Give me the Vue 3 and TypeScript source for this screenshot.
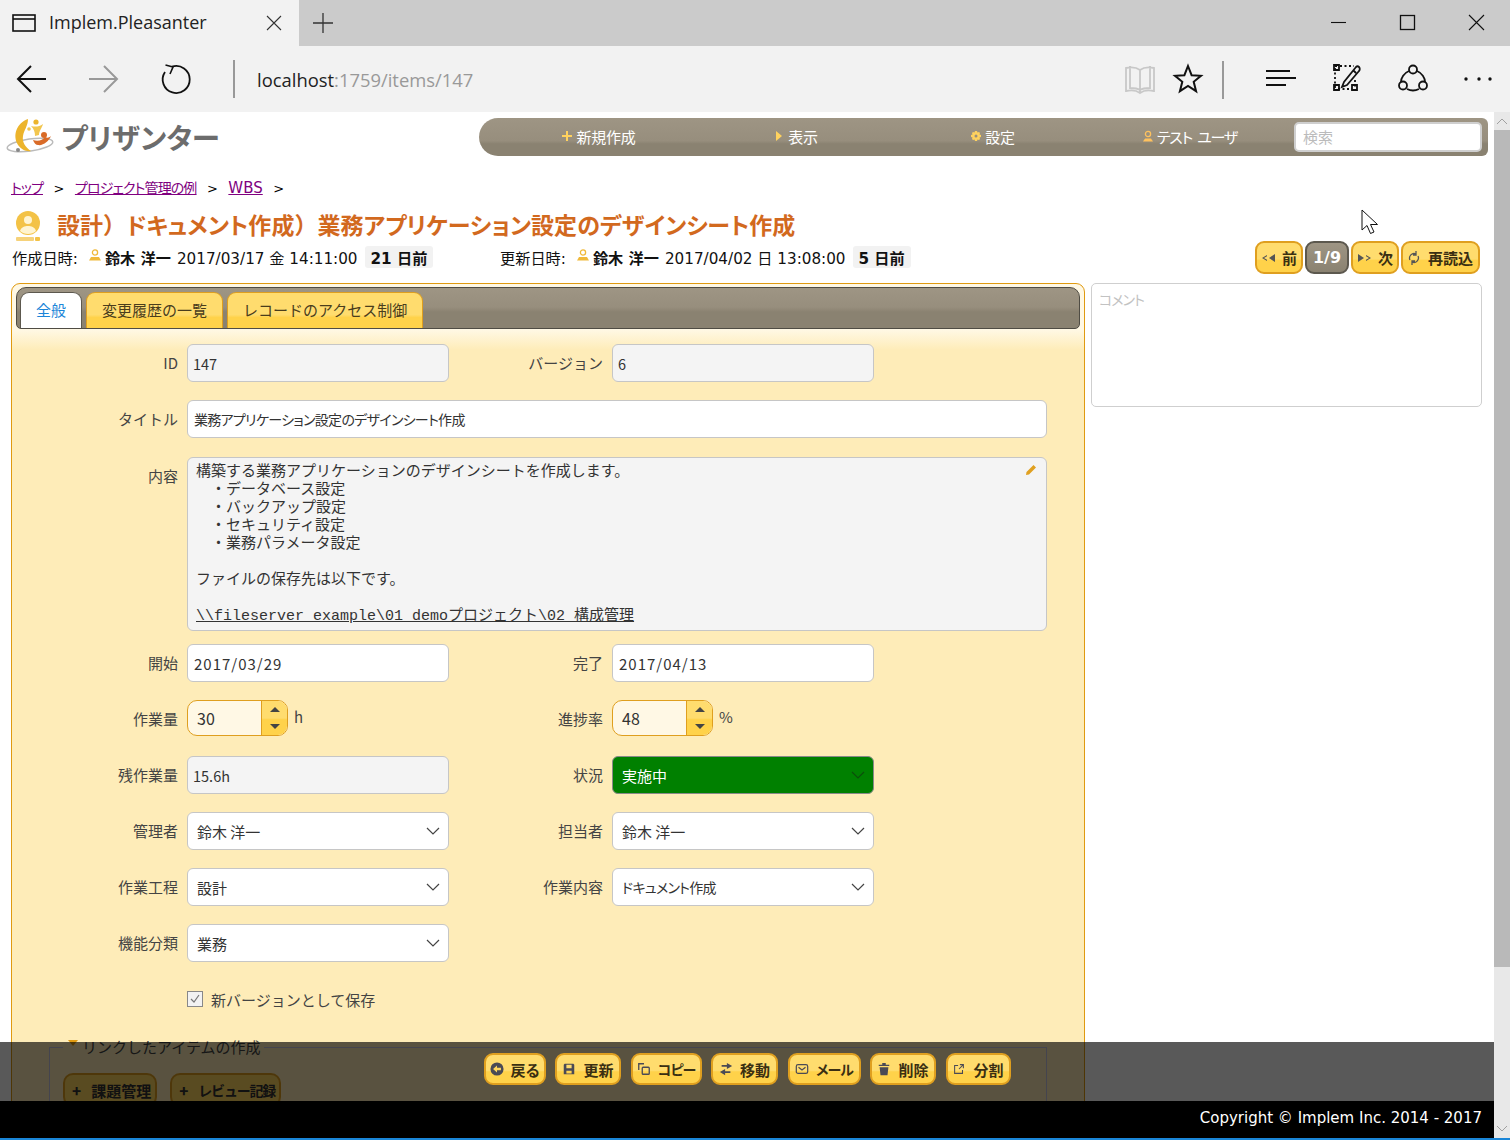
<script setup lang="ts">
interface CmdButton {
  label: string
  icon: string
  width: number
  tight?: boolean
}

const menuItems = [
  { label: '新規作成', mark: 'plus' },
  { label: '表示', mark: 'tri' },
  { label: '設定', mark: 'gear' },
  { label: 'テスト ユーザ', mark: 'user' },
]

const commands: CmdButton[] = [
  { label: '戻る', icon: 'back', width: 62 },
  { label: '更新', icon: 'save', width: 66 },
  { label: 'コピー', icon: 'copy', width: 71, tight: true },
  { label: '移動', icon: 'move', width: 67 },
  { label: 'メール', icon: 'mail', width: 73, tight: true },
  { label: '削除', icon: 'trash', width: 66 },
  { label: '分割', icon: 'split', width: 65 },
]

const bodyLines = [
  '構築する業務アプリケーションのデザインシートを作成します。',
  '　・データベース設定',
  '　・バックアップ設定',
  '　・セキュリティ設定',
  '　・業務パラメータ設定',
  '',
  'ファイルの保存先は以下です。',
  '',
]
</script>

<template>
  <div class="shot">
    <div class="tabstrip">
      <div class="browser-tab">
        <svg width="24" height="18" viewBox="0 0 24 18" fill="none" stroke="#111" stroke-width="1.6">
          <rect x="1" y="1" width="22" height="16" />
          <path d="M1 5h22" />
        </svg>
        <span class="browser-title">Implem.Pleasanter</span>
        <svg class="tab-x" width="16" height="16" viewBox="0 0 16 16" stroke="#333" stroke-width="1.1">
          <path d="M1 1l14 14M15 1L1 15" />
        </svg>
      </div>
      <svg class="tab-plus" width="20" height="20" viewBox="0 0 20 20" stroke="#333" stroke-width="1.3">
        <path d="M0 10h20M10 0v20" />
      </svg>
      <svg class="win-ctl" width="180" height="46" viewBox="0 0 180 46" fill="none" stroke="#111" stroke-width="1.1">
        <path d="M1 22.5h15" />
        <rect x="70.5" y="15.5" width="14" height="14" stroke-width="1.3" />
        <path d="M139 15l15 15M154 15l-15 15" />
      </svg>
    </div>

    <div class="toolbar">
      <svg width="257" height="66" viewBox="0 0 257 66" fill="none" stroke="#111" stroke-width="2">
        <path d="M46 33H19M31 20L18 33l13 13" />
        <path d="M89 33h28M104 20l13 13-13 13" stroke="#999" />
        <path d="M172 20.700A13.500 13.500 0 1 1 165 26" stroke-width="1.800" />
        <path d="M165.500 19l7.500 2-3 7" stroke-width="1.600" />
        <path d="M234 14v38" stroke="#999" />
      </svg>
      <div class="address">localhost<span>:1759/items/147</span></div>
      <svg width="390" height="66" viewBox="1120 46 390 66" fill="none" stroke="#111" stroke-width="1.8">
        <path d="M1140 70c-4-3-9-3-14-2v23c5-1 10-1 14 2c4-3 9-3 14-2V68c-5-1-10-1-14 2zM1140 70v23M1130 66v22c3 0 7 0 10 2c3-2 7-2 10-2V66" stroke="#c8c8c8" />
        <path d="M1188 66l3.600 9.200 9.400.6-7.300 6 2.400 9.400-8.100-5.200-8.100 5.200 2.400-9.400-7.300-6 9.400-.6z" stroke-width="2" />
        <path d="M1223 61v38" stroke="#999" stroke-width="2" />
        <path d="M1266 71h24M1266 78h30M1266 85h20" />
        <path d="M1335 66h2M1340 66h14M1335 68v20M1355 80v8M1338 89h14" stroke-dasharray="2 2.500" />
        <path d="M1334 65h5v5h-5zM1352 85h5v5h-5zM1334 85h5v5h-5z" />
        <path d="M1344 82l-2 5 5-2 12-14c1-1 1-3 0-4s-2-1-3 0zM1353 70l3 3" />
        <circle cx="1413" cy="69.500" r="4" />
        <circle cx="1403" cy="85.500" r="4" />
        <circle cx="1423" cy="85.500" r="4" />
        <path d="M1409 71c-5 2-8 7-8 11M1417 71c5 2 8 7 8 11M1407 89c4 2 8 2 12 0" />
        <circle cx="1466" cy="79" r="1.700" fill="#111" stroke="none" />
        <circle cx="1479" cy="79" r="1.700" fill="#111" stroke="none" />
        <circle cx="1490" cy="79" r="1.700" fill="#111" stroke="none" />
      </svg>
    </div>

    <div class="viewport">
      <div class="content">
        <header class="site-head">
          <div class="logo">
            <svg width="50" height="38" viewBox="0 0 50 38">
              <ellipse cx="24" cy="27" rx="23" ry="6" fill="none" stroke="#bbb" stroke-width="1.500" transform="rotate(-8 24 27)" />
              <path d="M22 1C11 5 6 17 12 27c3 4 8 7 13 6-6-4-9-9-8-15C18 12 22 8 22 1z" fill="#ecb42c" />
              <circle cx="30" cy="4" r="2.600" fill="#ecb42c" />
              <circle cx="23" cy="11" r="1.800" fill="#f2c64f" />
              <path d="M25 8c4 1 8 1 12-2-1 4-4 7-4 11l-4 1c0-4-1-7-4-10z" fill="#f2c64f" />
              <circle cx="38" cy="17" r="3" fill="#d96b28" />
              <path d="M27 22c5 2 10 0 12-3 2 1 4 1 6-1-2 5-8 10-13 9-2 0-4-2-5-5z" fill="#d96b28" />
              <circle cx="12" cy="32" r="2" fill="#888" />
            </svg>
            <span class="logo-text">プリザンター</span>
          </div>
          <nav class="menu">
            <div v-for="item in menuItems" :key="item.label" class="menu-item" :class="{ 'user-item': item.mark === 'user' }">
              <svg width="12" height="12" viewBox="0 0 12 12">
                <path v-if="item.mark === 'plus'" d="M5 1h2v4h4v2H7v4H5V7H1V5h4z" fill="#ffd25e" />
                <path v-else-if="item.mark === 'tri'" d="M3 1l6 5-6 5z" fill="#ffd25e" />
                <path v-else-if="item.mark === 'gear'" d="M5 1h2l.5 1.500L9 2l1 1-.5 1.500L11 5v2l-1.500.5L10 9l-1 1-1.500-.5L7 11H5l-.5-1.500L3 10 2 9l.5-1.500L1 7V5l1.500-.5L2 3l1-1 1.500.5zM6 4.500a1.500 1.500 0 1 0 0 3a1.500 1.500 0 1 0 0-3z" fill="#ffd25e" fill-rule="evenodd" />
                <g v-else>
                  <circle cx="6" cy="4" r="2.600" fill="none" stroke="#ffc25e" stroke-width="1.300" />
                  <path d="M3 8.500h6l2 3H1z" fill="#ffc25e" />
                </g>
              </svg>
              <span>{{ item.label }}</span>
            </div>
            <div class="search">検索</div>
          </nav>
        </header>

        <div class="breadcrumb">
          <a>トップ</a><span>&gt;</span><a>プロジェクト管理の例</a><span>&gt;</span><a class="wbs">WBS</a><span>&gt;</span>
        </div>

        <div class="title-row">
          <svg width="26" height="30" viewBox="0 0 26 30">
            <circle cx="13" cy="12" r="12" fill="#f3c246" />
            <circle cx="13" cy="9" r="4" fill="#fff4d0" />
            <path d="M5 20c1-4 5-5 8-5s7 1 8 5c-2 2-5 3-8 3s-6-1-8-3z" fill="#fff4d0" />
            <rect x="1" y="26" width="18" height="4" rx="1" fill="#f6d27a" />
            <rect x="20" y="26" width="5" height="4" rx="1" fill="#f3c246" />
          </svg>
          <h1>設計<span class="fw">）</span>ドキュメント作成<span class="fw">）</span>業務アプリケーション設定のデザインシート作成</h1>
        </div>

        <div class="meta-row">
          <div class="meta">
            <span class="meta-label">作成日時:</span>
            <svg class="user" width="12" height="12" viewBox="0 0 12 12"><circle cx="6" cy="3.500" r="2.600" fill="none" stroke="#f0b93a" stroke-width="1.300" /><path d="M2 8h8l2 3.500H0z" fill="#f0b93a" /></svg>
            <b>鈴木 洋一</b>
            <span>2017/03/17 金 14:11:00</span>
            <b class="days">21 日前</b>
          </div>
          <div class="meta updated">
            <span class="meta-label">更新日時:</span>
            <svg class="user" width="12" height="12" viewBox="0 0 12 12"><circle cx="6" cy="3.500" r="2.600" fill="none" stroke="#f0b93a" stroke-width="1.300" /><path d="M2 8h8l2 3.500H0z" fill="#f0b93a" /></svg>
            <b>鈴木 洋一</b>
            <span>2017/04/02 日 13:08:00</span>
            <b class="days">5 日前</b>
          </div>
          <div class="pager">
            <button class="pg prev" type="button"><svg width="15" height="8" viewBox="0 0 15 8" fill="#555"><path d="M6 1L1 4l5 3v-1.200L3 4l3-1.800zM14 0v8L8 4z" /></svg>前</button>
            <button class="pg count" type="button">1/9</button>
            <button class="pg next" type="button"><svg width="15" height="8" viewBox="0 0 15 8" fill="#555"><path d="M1 0v8l6-4zM9 1l5 3-5 3v-1.200L12 4 9 2.200z" /></svg>次</button>
            <button class="pg reload" type="button"><svg width="12" height="14" viewBox="0 0 12 14" fill="none" stroke="#555" stroke-width="1.300"><path d="M2 9a4.500 4.500 0 0 1 6-6M10 5a4.500 4.500 0 0 1-6 6M8 0v4h-3M4 14v-4h3" /></svg>再読込</button>
          </div>
        </div>

        <div class="main">
          <section class="panel">
            <div class="tabs">
              <div class="tab active">全般</div>
              <div class="tab">変更履歴の一覧</div>
              <div class="tab">レコードのアクセス制御</div>
            </div>

            <div class="form">
              <div class="row">
                <div class="field"><label>ID</label><div class="input ro">147</div></div>
                <div class="field second"><label>バージョン</label><div class="input ro">6</div></div>
              </div>
              <div class="row row-title">
                <div class="field wide"><label>タイトル</label><div class="input narrow">業務アプリケーション設定のデザインシート作成</div></div>
              </div>
              <div class="row row-body">
                <div class="field wide">
                  <label>内容</label>
                  <div class="markdown">
                    <svg class="pencil" width="12" height="12" viewBox="0 0 12 12"><path d="M8.500 1l2.500 2.500-7 7L1 11l.5-3z" fill="#e0a020" /></svg>
                    <div v-for="(line, i) in bodyLines" :key="i" class="md-line">{{ line }}</div>
                    <a class="md-line md-link">\\fileserver example\01 demoプロジェクト\02 構成管理</a>
                  </div>
                </div>
              </div>
              <div class="row">
                <div class="field"><label>開始</label><div class="input date">2017/03/29</div></div>
                <div class="field second"><label>完了</label><div class="input date">2017/04/13</div></div>
              </div>
              <div class="row">
                <div class="field">
                  <label>作業量</label>
                  <div class="spinner"><span class="spin-val">30</span><span class="spin-btn"><i class="up"></i><i class="down"></i></span></div>
                  <span class="unit">h</span>
                </div>
                <div class="field second">
                  <label>進捗率</label>
                  <div class="spinner"><span class="spin-val">48</span><span class="spin-btn"><i class="up"></i><i class="down"></i></span></div>
                  <span class="unit">%</span>
                </div>
              </div>
              <div class="row">
                <div class="field"><label>残作業量</label><div class="input ro">15.6h</div></div>
                <div class="field second">
                  <label>状況</label>
                  <div class="input select green">実施中<svg width="14" height="8" viewBox="0 0 14 8" fill="none" stroke="#0b4f0b" stroke-width="1.200"><path d="M1 1l6 6 6-6" /></svg></div>
                </div>
              </div>
              <div class="row">
                <div class="field">
                  <label>管理者</label>
                  <div class="input select">鈴木 洋一<svg width="14" height="8" viewBox="0 0 14 8" fill="none" stroke="#444" stroke-width="1.200"><path d="M1 1l6 6 6-6" /></svg></div>
                </div>
                <div class="field second">
                  <label>担当者</label>
                  <div class="input select">鈴木 洋一<svg width="14" height="8" viewBox="0 0 14 8" fill="none" stroke="#444" stroke-width="1.200"><path d="M1 1l6 6 6-6" /></svg></div>
                </div>
              </div>
              <div class="row">
                <div class="field">
                  <label>作業工程</label>
                  <div class="input select">設計<svg width="14" height="8" viewBox="0 0 14 8" fill="none" stroke="#444" stroke-width="1.200"><path d="M1 1l6 6 6-6" /></svg></div>
                </div>
                <div class="field second">
                  <label>作業内容</label>
                  <div class="input select narrow">ドキュメント作成<svg width="14" height="8" viewBox="0 0 14 8" fill="none" stroke="#444" stroke-width="1.200"><path d="M1 1l6 6 6-6" /></svg></div>
                </div>
              </div>
              <div class="row">
                <div class="field">
                  <label>機能分類</label>
                  <div class="input select">業務<svg width="14" height="8" viewBox="0 0 14 8" fill="none" stroke="#444" stroke-width="1.200"><path d="M1 1l6 6 6-6" /></svg></div>
                </div>
              </div>

              <div class="check-row">
                <span class="check"><svg width="12" height="12" viewBox="0 0 12 12" fill="none" stroke="#777" stroke-width="1.200"><path d="M2 6l3 3 5-7" /></svg></span>
                <span>新バージョンとして保存</span>
              </div>

              <fieldset class="links">
                <legend><i class="legend-tri"></i>リンクしたアイテムの作成</legend>
                <div class="link-btns">
                  <button type="button" class="link-btn"><b>+</b>課題管理</button>
                  <button type="button" class="link-btn"><b>+</b><span class="link-tight">レビュー記録</span></button>
                </div>
              </fieldset>
            </div>
          </section>
          <aside class="comment">コメント</aside>
        </div>
      </div>

      <div class="scrollbar">
        <svg width="16" height="18" viewBox="0 0 16 18" fill="none" stroke="#a0a0a0"><path d="M3 12l5-5 5 5" /></svg>
        <div class="thumb"></div>
        <svg class="scroll-down" width="16" height="18" viewBox="0 0 16 18" fill="none" stroke="#a0a0a0"><path d="M3 6l5 5 5-5" /></svg>
      </div>

      <div class="command-area">
        <button
          v-for="cmd in commands"
          :key="cmd.label"
          type="button"
          class="cmd"
          :class="{ tight: cmd.tight }"
          :style="{ width: `${cmd.width}px` }"
        >
          <svg width="14" height="14" viewBox="0 0 16 16">
            <g v-if="cmd.icon === 'back'"><circle cx="8" cy="8" r="7.500" fill="#4a4a55" /><path d="M3.500 8L8 4v2.500h4.500v3H8V12z" fill="#ffd65e" /></g>
            <path v-else-if="cmd.icon === 'save'" d="M3 2h10l1 1v11H2V3zM5 3v4h6V3zM5 10v3h6v-3z" fill="#4a4a55" fill-rule="evenodd" />
            <g v-else-if="cmd.icon === 'copy'" fill="none" stroke="#4a4a55" stroke-width="1.500"><path d="M2 9V2h6" /><rect x="6" y="6" width="8" height="8" rx="1" /></g>
            <path v-else-if="cmd.icon === 'move'" d="M9 1l6 3.500L9 8V5.500H3v-2h6zM7 8v2.500h6v2H7V15l-6-3.500z" fill="#4a4a55" />
            <g v-else-if="cmd.icon === 'mail'" fill="none" stroke="#4a4a55" stroke-width="1.400"><rect x="1.500" y="3" width="13" height="10" rx="2" /><path d="M4 6l4 3 4-3" /></g>
            <path v-else-if="cmd.icon === 'trash'" d="M6 1h4v2h4v1.500H2V3h4zM3 6h10l-1 9H4z" fill="#4a4a55" />
            <g v-else fill="none" stroke="#4a4a55" stroke-width="1.200"><path d="M12 9v4H3V4h4M8 8l5-5M9 3h4v4" /></g>
          </svg>
          <span>{{ cmd.label }}</span>
        </button>
      </div>
      <footer class="copyright">Copyright © Implem Inc. 2014 - 2017</footer>
    </div>

    <svg class="cursor" width="20" height="28" viewBox="0 0 20 28">
      <path d="M1 1v20l5-4.500 3.500 8 3.500-1.500-3.500-7.500h7z" fill="#fff" stroke="#111" stroke-width="1" />
    </svg>
  </div>
</template>

<style scoped>
.shot {
  position: relative;
  width: 1510px;
  height: 1140px;
  overflow: hidden;
  background: #fff;
  color: #333;
  font-family: "Noto Sans CJK JP", "Noto Sans", sans-serif;
  font-size: 15px;
  font-feature-settings: "palt";
}

.tabstrip {
  display: flex;
  align-items: center;
  height: 46px;
  background: #cbcbcb;
}

.browser-tab {
  display: flex;
  align-items: center;
  width: 299px;
  height: 46px;
  padding: 0 16px 0 12px;
  box-sizing: border-box;
  background: #f2f2f2;
}

.browser-title {
  margin: -2px 0 0 13px;
  font-family: "Open Sans", sans-serif;
  font-size: 18px;
  color: #222;
}

.tab-x {
  margin-left: auto;
  margin-right: 1px;
}

.tab-plus {
  margin-left: 14px;
  margin-top: -1px;
}

.win-ctl {
  margin-left: auto;
}

.toolbar {
  display: flex;
  align-items: center;
  height: 66px;
  background: #f2f2f2;
}

.address {
  flex: 1;
  padding-top: 1px;
  font-family: "Open Sans", sans-serif;
  font-size: 18.4px;
  color: #222;
}

.address span {
  color: #999;
}

.viewport {
  position: relative;
  display: flex;
  height: 1026px;
  overflow: hidden;
  border-bottom: 2px solid #1a86d8;
  box-sizing: content-box;
}

.content {
  width: 1494px;
  flex: none;
}

.site-head {
  display: flex;
  align-items: center;
  height: 50px;
  padding: 0 6px;
  box-sizing: border-box;
}

.logo {
  display: flex;
  align-items: center;
  width: 473px;
  gap: 5px;
}

.logo-text {
  font-size: 28.500px;
  font-weight: 700;
  line-height: 38px;
  color: #6c6c6c;
}

.menu {
  display: flex;
  align-items: center;
  width: 1009px;
  height: 38px;
  padding-left: 21px;
  box-sizing: border-box;
  border-radius: 19px 6px 6px 19px;
  background: linear-gradient(to bottom, #9e9584 0%, #978e7d 60%, #8a8271 68%, #8a8271 100%);
}

.menu-item {
  display: flex;
  align-items: center;
  justify-content: center;
  gap: 3px;
  width: 197px;
  padding-bottom: 2px;
  color: #fff;
  font-size: 15px;
  letter-spacing: -0.2px;
}

.menu-item.user-item {
  letter-spacing: -1.200px;
  word-spacing: 3px;
}

.search {
  width: 188px;
  height: 30px;
  margin-left: 6px;
  padding-left: 7px;
  box-sizing: border-box;
  border: 2px solid #cfcfcf;
  border-radius: 5px;
  background: #fff;
  color: #bbb;
  font-size: 15px;
  line-height: 26px;
}

.breadcrumb {
  display: flex;
  align-items: baseline;
  gap: 10.500px;
  height: 23px;
  margin-top: 15px;
  margin-bottom: 1px;
  padding-left: 11px;
  color: #000;
  font-size: 13px;
  font-family: "DejaVu Sans", "Noto Sans CJK JP", sans-serif;
}

.breadcrumb a {
  color: #800080;
  text-decoration: underline;
  font-family: "Noto Sans CJK JP", sans-serif;
  font-size: 14px;
  letter-spacing: -0.9px;
}

.breadcrumb .wbs {
  font-family: "DejaVu Sans", sans-serif;
  font-size: 15px;
  letter-spacing: 0;
}

.title-row {
  display: flex;
  align-items: center;
  gap: 16px;
  height: 34px;
  margin-top: 7px;
  padding-left: 15px;
}

.title-row svg {
  margin-top: 3px;
}

.title-row h1 {
  margin: 0;
  color: #d2691e;
  font-size: 23px;
  font-weight: 700;
  letter-spacing: 0.05px;
}

.fw {
  font-feature-settings: normal;
}

.meta-row {
  display: flex;
  align-items: center;
  height: 33px;
  padding: 0 14px 0 12px;
  color: #111;
  font-family: "DejaVu Sans", "Noto Sans CJK JP", sans-serif;
  font-size: 15.200px;
}

.meta {
  display: flex;
  align-items: center;
  gap: 6px;
  width: 488px;
  margin-top: -1px;
}

.meta .user {
  margin: 0 -2px 5px 5px;
}

.meta.updated {
  width: auto;
}

.days {
  margin-left: 1px;
  padding: 0 6px;
  border-radius: 3px;
  background: #f2f2f2;
}

.pager {
  display: flex;
  gap: 2px;
  margin-left: auto;
}

.pg {
  display: flex;
  align-items: center;
  justify-content: center;
  gap: 6px;
  height: 33px;
  padding: 0;
  box-sizing: border-box;
  border: 2px solid #df9f1f;
  border-radius: 9px;
  background: linear-gradient(to bottom, #ffdc6e 0%, #ffdc6e 55%, #ffd24a 60%, #ffd24a 100%);
  color: #3a2f12;
  font-family: "Noto Sans CJK JP", sans-serif;
  font-size: 15px;
  font-weight: 700;
}

.prev,
.next {
  width: 48px;
}

.count {
  width: 44px;
  border-color: #5c584e;
  background: linear-gradient(to bottom, #9e9584 0%, #8a8271 100%);
  color: #fff;
  font-family: "DejaVu Sans", sans-serif;
  font-size: 16px;
}

.reload {
  width: 79px;
  gap: 8px;
}

.main {
  display: flex;
  gap: 6px;
  padding-left: 11px;
  margin-top: 9px;
}

.panel {
  width: 1074px;
  height: 900px;
  padding: 3px 4px 0;
  box-sizing: border-box;
  border: 1px solid #e09a10;
  border-radius: 9px 9px 0 0;
  background: linear-gradient(to bottom, #fff8e4 0, #fff8e4 46px, #feecb8 66px);
}

.tabs {
  display: flex;
  align-items: flex-end;
  gap: 4px;
  height: 42px;
  padding-left: 3px;
  box-sizing: border-box;
  border: 1px solid #4f4c44;
  border-radius: 10px 10px 5px 5px;
  background: linear-gradient(to bottom, #9e9584 0%, #978e7d 48%, #8a8271 60%, #8a8271 100%);
}

.tab {
  height: 36px;
  padding: 0 15px;
  box-sizing: border-box;
  border: 1px solid #df9f1f;
  border-bottom: 0;
  border-radius: 9px 9px 0 0;
  background: linear-gradient(to bottom, #ffdc6e 0%, #ffdc6e 62%, #ffd24a 70%);
  color: #4a3d1c;
  font-size: 15px;
  font-feature-settings: normal;
  line-height: 34px;
}

.tab.active {
  border-color: #5c584e;
  background: #fff;
  color: #1b85d8;
}

.form {
  margin-left: -4px;
  padding-top: 15px;
}

.row {
  display: flex;
  margin-bottom: 18px;
}

.row-title {
  margin-bottom: 19px;
}

.row-body {
  margin-bottom: 13px;
}

.field {
  display: flex;
  align-items: flex-start;
  gap: 9px;
  width: 437px;
}

.field.second,
.field.wide {
  width: auto;
}

.field label {
  width: 166px;
  flex: none;
  color: #444;
  font-size: 15px;
  font-feature-settings: normal;
  line-height: 38px;
  text-align: right;
}

.field.second label {
  width: 154px;
}

.input {
  display: flex;
  align-items: center;
  justify-content: space-between;
  width: 262px;
  height: 38px;
  padding: 0 8px 0 6px;
  box-sizing: border-box;
  border: 1px solid #c6c6c6;
  border-radius: 6px;
  background: #fff;
  color: #333;
  font-size: 15px;
}

.input.ro {
  background: #f4f4f4;
  font-size: 14.500px;
  padding-left: 5px;
}

.input.date {
  letter-spacing: 1px;
}

.input.narrow {
  font-size: 14px;
  letter-spacing: -0.7px;
}

.wide .input {
  width: 860px;
}

.select {
  padding-left: 9px;
}

.green {
  border-color: #8a8a8a;
  background: #008000;
  color: #fff;
}

.markdown {
  position: relative;
  width: 860px;
  height: 174px;
  padding: 6px 8px 4px;
  box-sizing: border-box;
  border: 1px solid #c6c6c6;
  border-radius: 6px;
  background: #f4f4f4;
  color: #333;
  font-family: "Liberation Mono", "Noto Sans CJK JP", monospace;
  font-feature-settings: normal;
  font-size: 15px;
  line-height: 18px;
}

.md-line {
  display: block;
  height: 18px;
  white-space: pre;
}

.md-link {
  color: #333;
  text-decoration: underline;
}

.pencil {
  position: absolute;
  top: 6px;
  right: 9px;
}

.spinner {
  display: flex;
  width: 101px;
  height: 36px;
  box-sizing: border-box;
  border: 1px solid #df9f1f;
  border-radius: 10px;
  overflow: hidden;
  background: #fff8e5;
}

.spin-val {
  flex: 1;
  padding-left: 9px;
  font-size: 16px;
  line-height: 34px;
}

.spin-btn {
  display: flex;
  flex-direction: column;
  justify-content: space-around;
  align-items: center;
  width: 25px;
  border-left: 1px solid #df9f1f;
  background: linear-gradient(to bottom, #ffdc6e 0%, #ffdc6e 50%, #ffd24a 55%);
}

.up,
.down {
  width: 0;
  height: 0;
  border-left: 5px solid transparent;
  border-right: 5px solid transparent;
}

.up {
  border-bottom: 5px solid #444;
}

.down {
  border-top: 5px solid #444;
}

.unit {
  margin-left: -3px;
  color: #444;
  line-height: 34px;
}

.check-row {
  display: flex;
  align-items: center;
  gap: 8px;
  margin: 27px 0 29px 175px;
  color: #444;
  height: 20px;
  font-feature-settings: normal;
}

.check {
  display: flex;
  align-items: center;
  justify-content: center;
  width: 16px;
  height: 16px;
  box-sizing: border-box;
  border: 1px solid #888;
  background: #f2f2f2;
}

.links {
  width: 998px;
  height: 120px;
  margin: 0 0 0 37px;
  padding: 0 13px;
  box-sizing: border-box;
  border: 1px solid #c4c4e0;
}

.links legend {
  display: flex;
  align-items: center;
  gap: 4px;
  padding: 0 3px 0 5px;
  color: #444;
  font-size: 15px;
  font-feature-settings: normal;
  line-height: 18px;
}

.legend-tri {
  width: 0;
  height: 0;
  margin-bottom: 8px;
  border-left: 5px solid transparent;
  border-right: 5px solid transparent;
  border-top: 6px solid #e09a10;
}

.link-btns {
  display: flex;
  gap: 13px;
  margin-top: 17px;
}

.link-btn {
  display: flex;
  align-items: center;
  gap: 10px;
  height: 34px;
  padding: 0 4px 0 7px;
  border: 2px solid #df9f1f;
  border-radius: 10px;
  background: #ffd65e;
  color: #333;
  font-family: "Noto Sans CJK JP", sans-serif;
  font-size: 15px;
  font-weight: 700;
}

.link-tight {
  font-size: 14px;
  letter-spacing: -1.200px;
}

.comment {
  width: 391px;
  height: 124px;
  padding: 5px 7px;
  box-sizing: border-box;
  border: 1px solid #cfcfcf;
  border-radius: 5px;
  color: #c2c2c2;
  font-size: 14px;
  letter-spacing: -1px;
}

.scrollbar {
  position: relative;
  width: 16px;
  flex: none;
  background: #e8e8e8;
  font-size: 0;
}

.thumb {
  height: 837px;
  background: #b9b9b9;
}

.scroll-down {
  position: absolute;
  right: 0;
  bottom: 0;
}

.command-area {
  position: absolute;
  left: 0;
  bottom: 37px;
  display: flex;
  justify-content: center;
  gap: 9.500px;
  width: 1494px;
  height: 59px;
  padding-top: 11px;
  box-sizing: border-box;
  background: rgba(0, 0, 0, 0.65);
}

.cmd {
  display: flex;
  align-items: center;
  justify-content: center;
  gap: 7px;
  height: 32px;
  padding: 0;
  box-sizing: border-box;
  border: 2px solid #df9f1f;
  border-radius: 9px;
  background: linear-gradient(to bottom, #ffdc6e 0%, #ffdc6e 55%, #ffd24a 60%);
  color: #3a2f12;
  font-family: "Noto Sans CJK JP", sans-serif;
  font-size: 15px;
  font-weight: 700;
  font-feature-settings: "palt";
}

.cmd.tight span {
  font-size: 14px;
  letter-spacing: -1px;
}

.copyright {
  position: absolute;
  left: 0;
  bottom: 0;
  width: 1494px;
  height: 37px;
  padding-right: 12px;
  box-sizing: border-box;
  background: #000;
  color: #fff;
  font-family: "DejaVu Sans", sans-serif;
  font-size: 15px;
  line-height: 35px;
  text-align: right;
}

.cursor {
  position: absolute;
  left: 1361px;
  top: 209px;
}
</style>

<style>
html,
body {
  margin: 0;
  overflow: hidden;
}
</style>
